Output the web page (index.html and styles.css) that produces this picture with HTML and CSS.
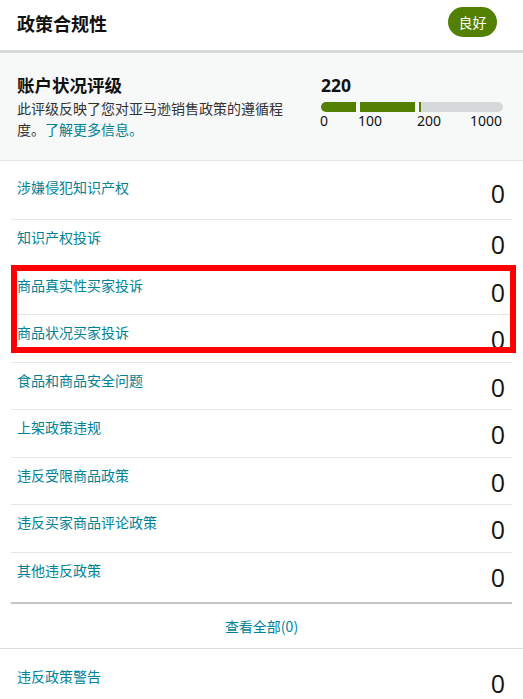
FILE: index.html
```html
<!DOCTYPE html>
<html lang="zh-CN">
<head>
<meta charset="utf-8">
<link rel="stylesheet" href="styles.css">
</head>
<body>
<div class="card">
  <header class="head">
    <h1 class="title">政策合规性</h1>
    <span class="badge">良好</span>
  </header>
  <section class="rating">
    <div class="rating-text">
      <h2 class="rating-title">账户状况评级</h2>
      <p class="rating-desc">此评级反映了您对亚马逊销售政策的遵循程度。<a class="link" href="#">了解更多信息。</a></p>
    </div>
    <div class="score">
      <div class="score-num">220</div>
      <div class="bar">
        <span class="seg seg1 fill"></span>
        <span class="seg seg2 fill"></span>
        <span class="seg seg3"><span class="part" style="width:2px"></span></span>
      </div>
      <div class="scale">
        <span>0</span><span>100</span><span>200</span><span class="end">1000</span>
      </div>
    </div>
  </section>
  <div class="list">
    <div class="row first"><span class="label">涉嫌侵犯知识产权</span><span class="num">0</span></div>
    <div class="row"><span class="label">知识产权投诉</span><span class="num">0</span></div>
    <div class="row"><span class="label">商品真实性买家投诉</span><span class="num">0</span></div>
    <div class="row"><span class="label">商品状况买家投诉</span><span class="num">0</span></div>
    <div class="row"><span class="label">食品和商品安全问题</span><span class="num">0</span></div>
    <div class="row"><span class="label">上架政策违规</span><span class="num">0</span></div>
    <div class="row"><span class="label">违反受限商品政策</span><span class="num">0</span></div>
    <div class="row"><span class="label">违反买家商品评论政策</span><span class="num">0</span></div>
    <div class="row last"><span class="label">其他违反政策</span><span class="num">0</span></div>
    <div class="view-all"><a class="link" href="#">查看全部(0)</a></div>
  </div>
  <div class="list warn">
    <div class="row"><span class="label">违反政策警告</span><span class="num">0</span></div>
  </div>
  <div class="highlight"></div>
</div>
</body>
</html>
```
FILE: styles.css
```css
* { box-sizing: border-box; }
html, body { margin: 0; padding: 0; background: #fff; }
body {
  font-family: "Noto Sans", "Noto Sans CJK SC", sans-serif;
  color: #111;
  width: 523px;
  height: 699px;
  overflow: hidden;
}
.card { position: relative; }
.head {
  height: 53px;
  display: flex;
  align-items: flex-start;
  justify-content: space-between;
  padding: 7px 26px 0 17px;
  border-bottom: 3px solid #d5d9d9;
}
.title {
  margin: 0;
  padding-top: 4px;
  font-size: 18px;
  line-height: 24px;
  font-weight: 700;
  font-family: "Noto Sans CJK SC", sans-serif;
}
.badge {
  display: inline-flex;
  align-items: center;
  justify-content: center;
  width: 49px;
  height: 30px;
  border-radius: 15px;
  background: #538000;
  color: #fff;
  font-size: 14px;
  font-family: "Noto Sans CJK SC", sans-serif;
}
.rating {
  background: #f7f8f8;
  height: 108px;
  display: flex;
  justify-content: space-between;
  padding: 20px 20px 0 17px;
  border-bottom: 1px solid #e3e6e6;
}
.rating-text { width: 272px; }
.rating-title {
  margin: 0;
  font-size: 17.5px;
  line-height: 24px;
  font-weight: 700;
  font-family: "Noto Sans CJK SC", sans-serif;
}
.rating-desc {
  margin: 1px 0 0;
  font-size: 14px;
  line-height: 21px;
  color: #333;
  font-family: "Noto Sans CJK SC", sans-serif;
}
.link { color: #008296; text-decoration: none; }
.score { width: 182px; padding-top: 1px; }
.score-num {
  font-size: 17.5px;
  font-weight: 700;
  line-height: 22px;
  font-family: "Noto Sans", sans-serif;
}
.bar {
  margin-top: 6px;
  display: grid;
  grid-template-columns: 35px 55px 84px;
  column-gap: 4px;
  height: 10px;
}
.seg { display: block; height: 10px; background: #d5d9d9; overflow: hidden; }
.seg.fill { background: #538000; }
.seg1 { border-radius: 5px 0 0 5px; }
.seg3 { border-radius: 0 5px 5px 0; }
.part { display: block; height: 10px; background: #538000; }
.scale {
  display: grid;
  grid-template-columns: 38px 59px 44px 41px;
  font-size: 14px;
  line-height: 17px;
  color: #111;
  margin-left: -1px;
}
.scale .end { text-align: right; }
.list { padding: 0 11px; }
.row {
  height: 47.5px;
  display: flex;
  justify-content: space-between;
  align-items: flex-start;
  padding: 0 7px 0 6px;
  border-bottom: 1px solid #e7e7e7;
}
.row.first { height: 59px; padding-top: 9px; }
.row.last { height: 51.5px; border-bottom: 2px solid #c4c6c6; }
.label {
  padding-top: 8px;
  font-size: 14px;
  line-height: 18px;
  color: #008296;
  font-family: "Noto Sans CJK SC", sans-serif;
}
.num {
  padding-top: 11px;
  font-size: 25px;
  line-height: 26px;
  color: #111;
  font-family: "Open Sans", sans-serif;
}
.row.first .num { padding-top: 10px; }
.view-all {
  height: 44px;
  display: flex;
  align-items: center;
  justify-content: center;
  font-size: 14px;
  font-family: "Noto Sans CJK SC", sans-serif;
}
.warn { border-top: 1px solid #dddddd; padding-top: 10px; }
.warn .row { border-bottom: none; }
.highlight {
  position: absolute;
  left: 11px;
  top: 265px;
  width: 505px;
  height: 88px;
  border: 6px solid #ff0000;
  pointer-events: none;
}
```
